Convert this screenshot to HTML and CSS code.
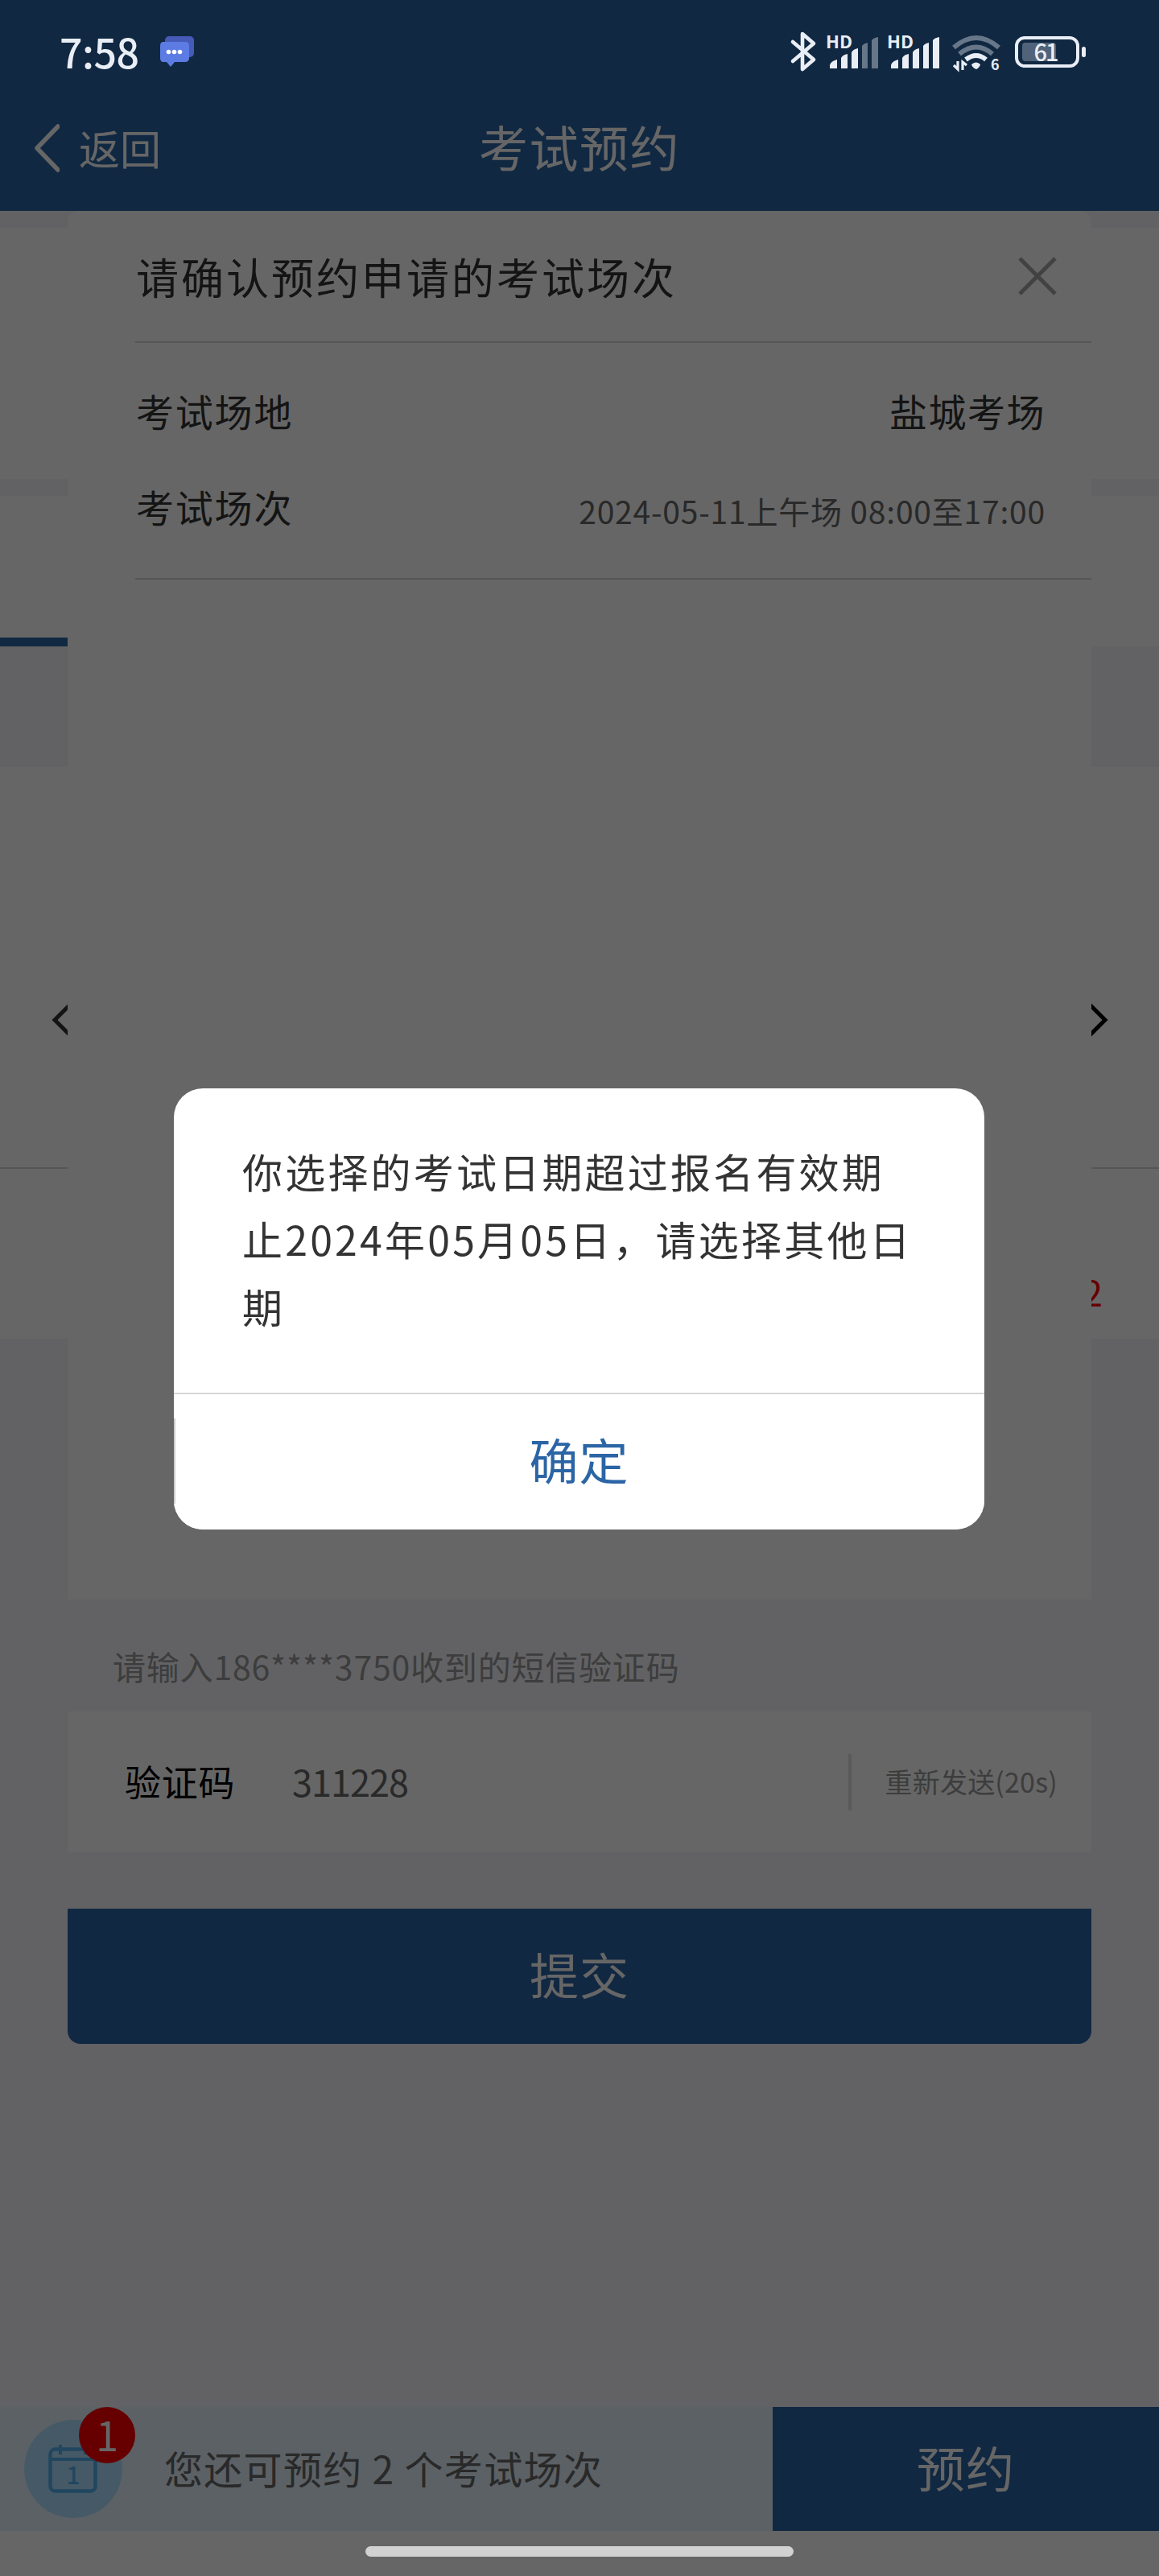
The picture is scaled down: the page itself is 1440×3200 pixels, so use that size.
FILE: index.html
```html
<!DOCTYPE html>
<html lang="zh-CN">
<head>
    <meta charset="UTF-8">
    <meta name="viewport" content="width=device-width, initial-scale=1.0">
    <title>考试预约</title>
    <link rel="stylesheet" href="styles.css">
</head>
<body>
    <div class="page">
        <header class="navbar">
            <div class="back">
                <svg width="34" height="62" viewBox="0 0 34 62"><path d="M32 4L6 31L32 58" fill="none" stroke="#fff" stroke-width="5.500" stroke-linecap="round" stroke-linejoin="round"/></svg>
                <span>返回</span>
            </div>
            <h1>考试预约</h1>
        </header>

        <main class="content">
            <section class="block block-info"></section>
            <section class="block block-tabs">
                <div class="tab-line"></div>
            </section>
            <section class="block block-calendar">
                <div class="days">
                    <svg width="30" height="50" viewBox="0 0 30 50"><path d="M31 2L8 25L31 48" fill="none" stroke="#333" stroke-width="5"/></svg>
                    <svg width="30" height="50" viewBox="0 0 30 50"><path d="M-1 1L23 25L-1 49" fill="none" stroke="#000" stroke-width="5"/></svg>
                </div>
                <div class="remain">2</div>
            </section>
        </main>

        <footer class="footer">
            <div class="tips">
                <div class="cal">
                    <svg width="62" height="64" viewBox="0 0 62 64">
                        <rect x="2.500" y="7.500" width="56" height="52" rx="6" fill="none" stroke="#52b0f0" stroke-width="4.500"/>
                        <path d="M2 20H59M15 2V14M46 2V14" stroke="#52b0f0" stroke-width="4"/>
                        <text x="31" y="51" text-anchor="middle">1</text>
                    </svg>
                    <span class="badge">1</span>
                </div>
                <span class="tips-text">您还可预约 2 个考试场次</span>
            </div>
            <button class="book">预约</button>
        </footer>
        <div class="safe-area"></div>

        <!-- 确认场次 -->
        <div class="confirm">
            <div class="sheet">
                <div class="sheet-title">
                    <span>请确认预约申请的考试场次</span>
                    <svg width="50" height="50" viewBox="0 0 50 50"><path d="M3 3L47 47M47 3L3 47" stroke="#a6a6a6" stroke-width="5"/></svg>
                </div>
                <div class="sheet-rows">
                    <div class="row"><span>考试场地</span><span class="place">盐城考场</span></div>
                    <div class="row"><span>考试场次</span><span class="time">2024-05-11上午场 08:00至17:00</span></div>
                </div>
            </div>
            <p class="hint">请输入186****3750收到的短信验证码</p>
            <div class="code">
                <label>验证码</label>
                <span class="code-value">311228</span>
                <span class="resend">重新发送(20s)</span>
            </div>
            <button class="submit">提交</button>
        </div>

        <div class="mask"></div>

        <div class="alert">
            <p class="alert-text">你选择的考试日期超过报名有效期止2024年05月05日，请选择其他日期</p>
            <button class="alert-ok">确定</button>
        </div>

        <div class="statusbar">
            <span class="clock">7:58</span>
            <svg class="msg" width="44" height="40" viewBox="0 0 44 40">
                <rect x="7" y="0" width="36" height="26" rx="5" fill="#465ab8"/>
                <path d="M5 7H32Q37 7 37 12V27Q37 32 32 32H19L14 38L9 32H5Q1 32 1 27V12Q1 7 5 7Z" fill="#5c7ce4"/>
                <circle cx="11.500" cy="19.500" r="2.800" fill="#fff"/><circle cx="18.500" cy="19.500" r="2.800" fill="#fff"/><circle cx="25.500" cy="19.500" r="2.800" fill="#fff"/>
            </svg>
            <svg class="state" width="380" height="60" viewBox="980 35 380 60" fill="#e9eef6">
                <path d="M985 52L1011 74L997 86V42L1011 54L985 76" fill="none" stroke="#e9eef6" stroke-width="4.600" stroke-linejoin="round" stroke-linecap="round"/>
                <text x="1026" y="60" font-size="21" textLength="33" lengthAdjust="spacingAndGlyphs">HD</text>
                <path d="M1031 85V81Q1032 76 1040 74V85ZM1045 85V72Q1047 68 1053 67V85ZM1058 85V65Q1060 61 1066 60V85Z"/>
                <path d="M1071 85V57Q1073 54 1078 53V85ZM1083 85V50Q1085 47 1091 46V85Z" opacity=".4"/>
                <text x="1102" y="60" font-size="21" textLength="33" lengthAdjust="spacingAndGlyphs">HD</text>
                <path d="M1107 85V81Q1108 76 1116 74V85ZM1121 85V72Q1123 68 1129 67V85ZM1134 85V65Q1136 61 1142 60V85ZM1147 85V57Q1149 54 1154 53V85ZM1159 85V50Q1161 47 1167 46V85Z"/>
                <g fill="none" stroke="#e9eef6" stroke-width="6">
                    <path d="M1185 59Q1213 35 1241 59" opacity=".4"/>
                    <path d="M1192 67Q1213 50 1233 67" opacity=".4"/>
                    <path d="M1200 74Q1213 64 1225 74"/>
                </g>
                <path d="M1207 80Q1213 75 1218 80Q1217 84 1213 86Q1208 84 1207 80Z"/>
                <path d="M1190 76V86L1185 81M1196 87V77L1201 81" fill="none" stroke="#e9eef6" stroke-width="3.200"/>
                <text x="1231" y="87" font-size="18">6</text>
                <rect x="1263" y="47" width="76" height="35" rx="10" fill="none" stroke="#e9eef6" stroke-width="4"/>
                <rect x="1270" y="53" width="42" height="23" rx="4" opacity=".3"/>
                <text class="level" x="1299" y="76" font-size="29" text-anchor="middle">61</text>
                <rect x="1344" y="58" width="5" height="13" rx="2.500"/>
            </svg>
        </div>
        <div class="home-bar"></div>
    </div>
</body>
</html>
```
FILE: styles.css
```css
* {
    box-sizing: border-box;
}
body {
    margin: 0;
    font-family: "Noto Sans CJK SC", sans-serif;
    background-color: #f5f5fa;
    color: #333;
}
button {
    font-family: inherit;
    border: none;
    padding: 0 0 7px;
    cursor: pointer;
}
.page {
    position: relative;
    display: flex;
    flex-direction: column;
    width: 1440px;
    height: 3200px;
    overflow: hidden;
}

/* 顶部导航 */
.navbar {
    display: grid;
    grid-template-columns: 1fr auto 1fr;
    align-items: center;
    height: 262px;
    padding: 106px 40px 0;
    background-color: #2b65a5;
    color: #fff;
}
.back {
    display: flex;
    align-items: center;
    gap: 24px;
    font-size: 51px;
    line-height: 60px;
}
.back span {
    padding-bottom: 3px;
}
.navbar h1 {
    margin: 0;
    padding-bottom: 5px;
    font-size: 61px;
    font-weight: 400;
    line-height: 80px;
    letter-spacing: 1.500px;
}

/* 底层页面 */
.content {
    flex: 1;
    padding-top: 21px;
}
.block {
    background-color: #fff;
}
.block-info {
    height: 312px;
    margin-bottom: 21px;
}
.block-tabs {
    display: flex;
    align-items: flex-end;
    height: 187px;
    margin-bottom: 150px;
}
.tab-line {
    width: 720px;
    height: 11px;
    background-color: #2b65a5;
}
.block-calendar {
    height: 710px;
}
.days {
    display: flex;
    justify-content: space-between;
    height: 499px;
    padding: 289px 60px 0;
    border-bottom: 2px solid #d8d8d8;
}
.remain {
    padding: 117px 70px 0 0;
    font-size: 44px;
    line-height: 70px;
    text-align: right;
    color: #f00;
}
.footer {
    display: flex;
    height: 154px;
}
.tips {
    display: flex;
    align-items: center;
    width: 960px;
    padding-left: 30px;
    background-color: #e4f2fc;
}
.cal {
    position: relative;
    display: flex;
    align-items: center;
    justify-content: center;
    width: 122px;
    height: 122px;
    border-radius: 50%;
    background-color: #b0dfff;
}
.cal text {
    font-size: 30px;
    font-weight: 500;
    fill: #52b0f0;
}
.badge {
    position: absolute;
    left: 68px;
    top: -16px;
    width: 70px;
    height: 70px;
    border-radius: 50%;
    background-color: #f00;
    color: #fff;
    font-size: 50px;
    line-height: 66px;
    text-align: center;
}
.tips-text {
    margin-left: 52px;
    padding-bottom: 5px;
    font-size: 48px;
    letter-spacing: 1.300px;
    color: #666;
}
.book {
    flex: 1;
    background-color: #2b65a5;
    color: #fff;
    font-size: 60px;
    letter-spacing: 1px;
}
.safe-area {
    height: 56px;
    background-color: #fff;
}

/* 确认场次 */
.confirm {
    position: absolute;
    left: 84px;
    top: 262px;
    width: 1272px;
}
.sheet {
    height: 1725px;
    padding-left: 84px;
    border-radius: 14px 14px 0 0;
    background-color: #fff;
}
.sheet-title {
    display: flex;
    align-items: center;
    justify-content: space-between;
    height: 164px;
    padding: 0 42px 0 1px;
    border-bottom: 2px solid #d4d4d4;
    font-size: 53px;
    letter-spacing: 3px;
}
.sheet-rows {
    height: 294px;
    padding: 24px 57px 0 1px;
    border-bottom: 2px solid #d4d4d4;
}
.row {
    display: flex;
    align-items: center;
    justify-content: space-between;
    height: 119px;
    font-size: 47px;
    letter-spacing: 1.800px;
}
.place {
    letter-spacing: 1.500px;
}
.time {
    padding-top: 11px;
    font-size: 39px;
    letter-spacing: 0.800px;
    color: #666;
}
.hint {
    margin: 0;
    padding-left: 56px;
    height: 139px;
    line-height: 165px;
    font-size: 41px;
    letter-spacing: 0.800px;
    color: #999;
}
.code {
    display: flex;
    align-items: center;
    height: 175px;
    padding: 0 42px 0 71px;
    background-color: #fff;
    font-size: 45px;
}
.code label {
    padding-bottom: 3px;
    letter-spacing: 0.700px;
    color: #000;
}
.code-value {
    flex: 1;
    margin-left: 71px;
    padding-bottom: 3px;
    letter-spacing: -1px;
    color: #666;
}
.resend {
    height: 70px;
    padding-left: 42px;
    border-left: 4px solid #e2e2e2;
    font-size: 34px;
    line-height: 67px;
    letter-spacing: 0.200px;
    color: #999;
}
.submit {
    display: block;
    width: 100%;
    height: 168px;
    margin-top: 70px;
    border-radius: 0 0 16px 16px;
    background-color: #2b65a5;
    color: #fff;
    font-size: 61px;
    letter-spacing: 1px;
}

/* 提示弹窗 */
.mask {
    position: absolute;
    inset: 0;
    background-color: rgba(0, 0, 0, 0.6);
}
.alert {
    position: absolute;
    left: 216px;
    top: 1352px;
    width: 1007px;
    height: 548px;
    border-radius: 36px;
    background-color: #fff;
    overflow: hidden;
}
.alert-text {
    height: 378px;
    margin: 0;
    padding: 60px 80px 0 85px;
    font-size: 50px;
    line-height: 84px;
    letter-spacing: 3.200px;
}
.alert-ok {
    width: 100%;
    height: 170px;
    border-top: 2px solid #d6d8d8;
    background: linear-gradient(#ccc, #ccc) 0 30px / 2px 106px no-repeat #fff;
    color: #2b65a5;
    font-size: 61px;
    letter-spacing: 1px;
}

/* 系统状态栏 */
.statusbar {
    position: absolute;
    left: 0;
    top: 0;
    display: flex;
    align-items: center;
    width: 1440px;
    height: 130px;
    padding: 0 80px 0 74px;
    color: #e9eef6;
}
.clock {
    width: 124px;
    padding-bottom: 4px;
    font-size: 50px;
    font-weight: 500;
    letter-spacing: -0.500px;
}
.state {
    margin-left: auto;
}
.state text {
    font-weight: 700;
}
.state .level {
    font-weight: 500;
    letter-spacing: -2px;
}
.home-bar {
    position: absolute;
    left: 454px;
    top: 3163px;
    width: 532px;
    height: 13px;
    border-radius: 7px;
    background-color: #d2d2d2;
}
```
